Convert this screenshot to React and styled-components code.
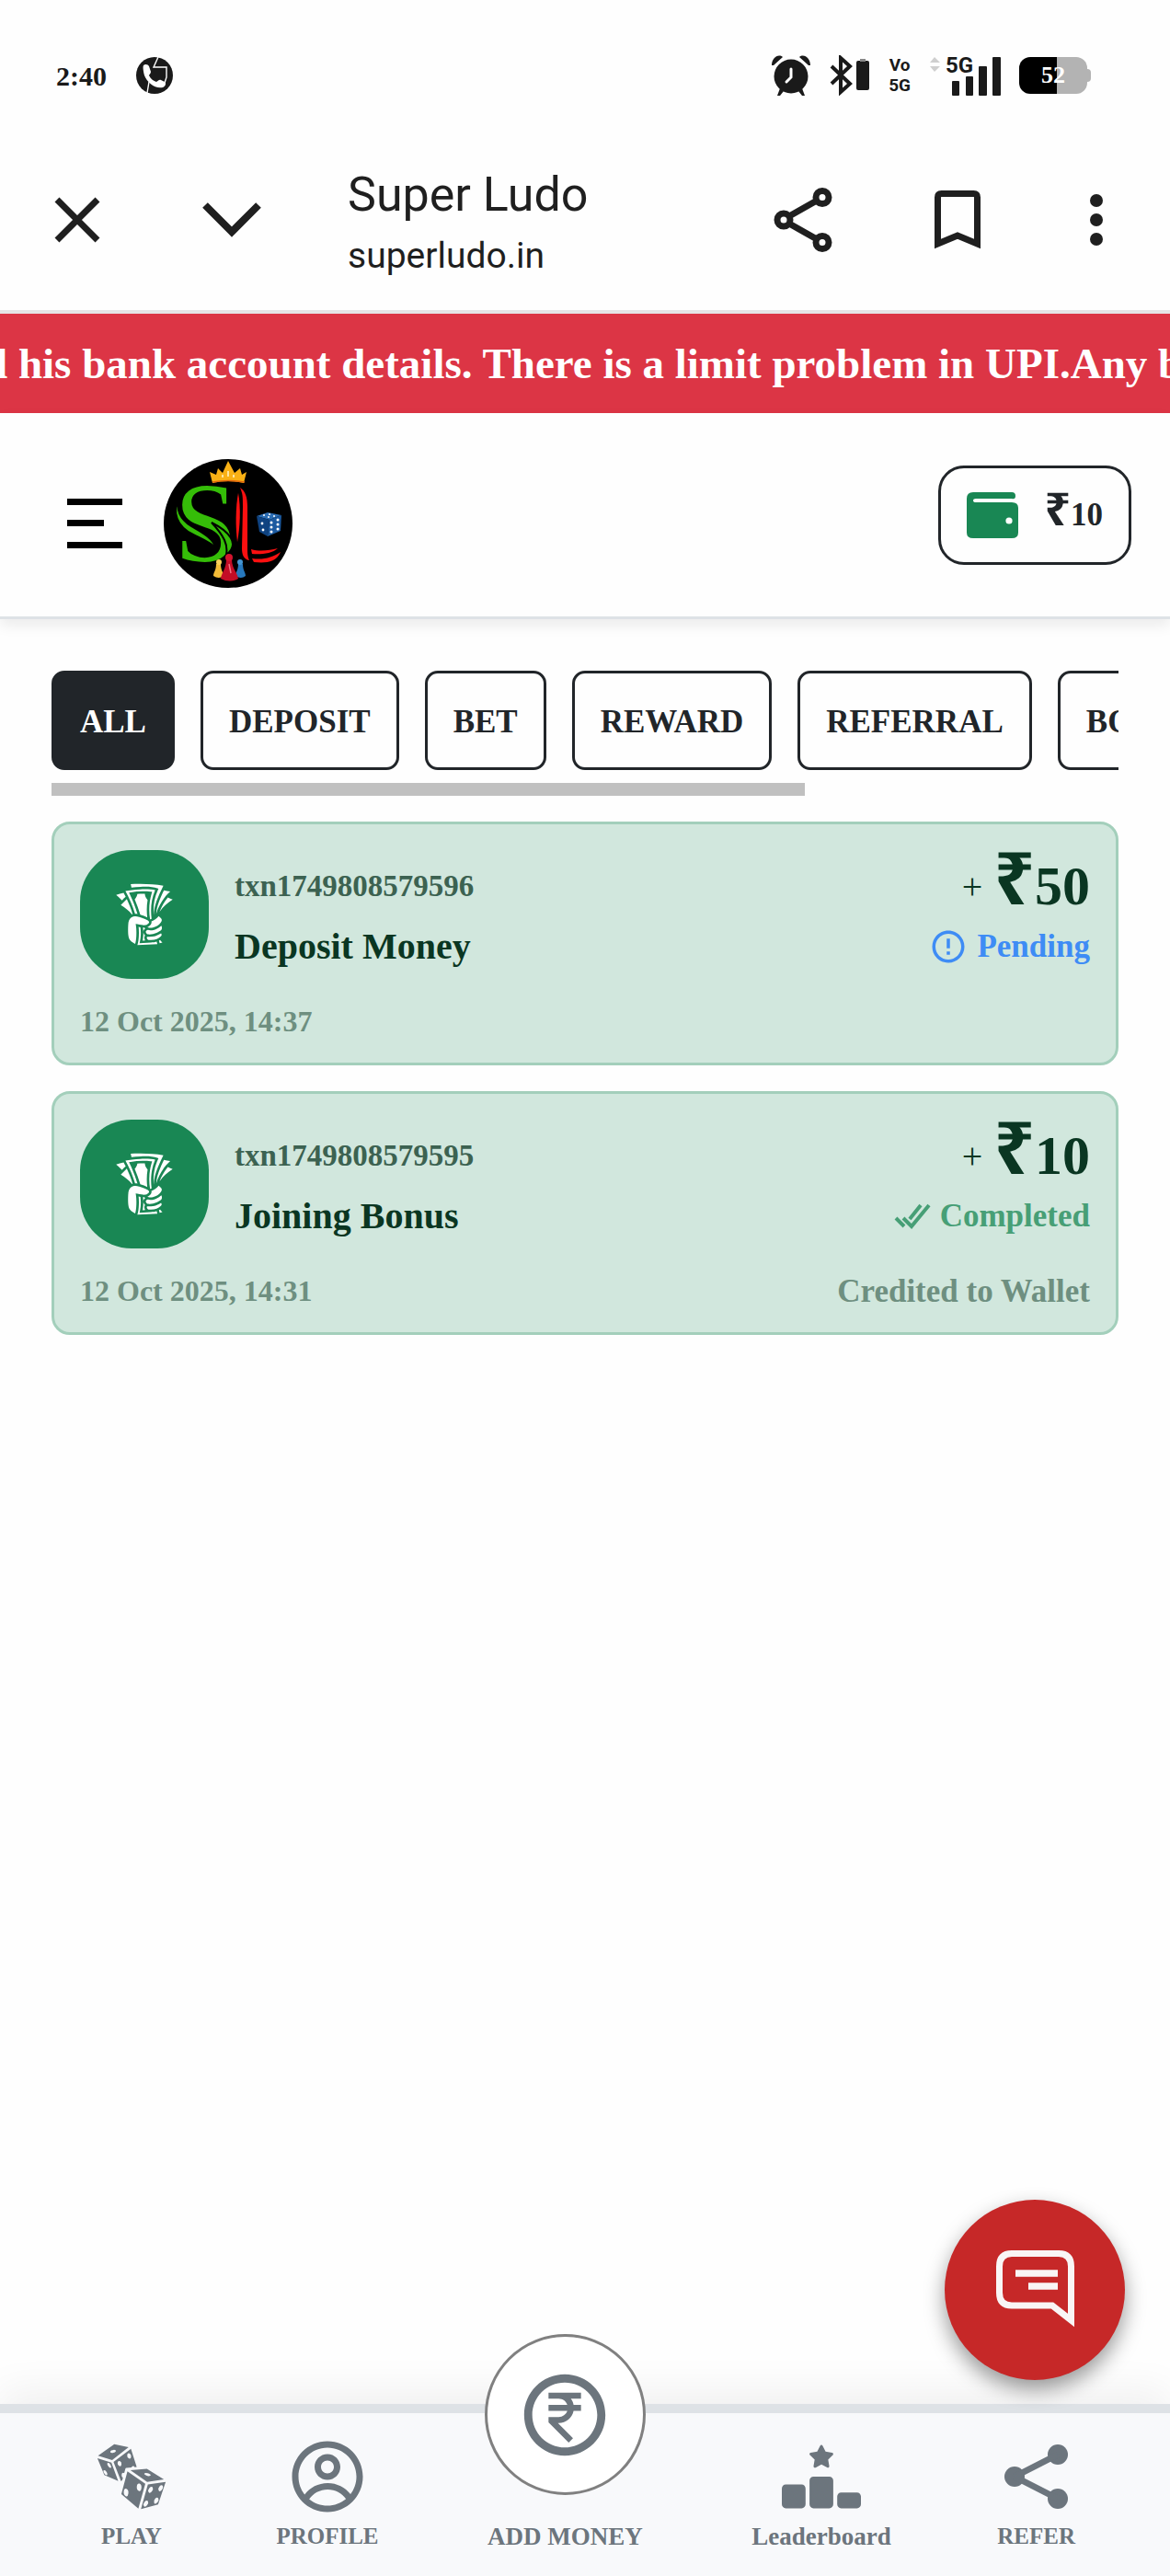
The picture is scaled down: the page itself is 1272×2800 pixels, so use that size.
import React from "react";
import styled, { createGlobalStyle } from "styled-components";
import { CgProfile } from "react-icons/cg";
import { GiRollingDices, GiTakeMyMoney } from "react-icons/gi";
import { RiMoneyRupeeCircleLine } from "react-icons/ri";
import { FaRankingStar } from "react-icons/fa6";
import { MdErrorOutline } from "react-icons/md";

const GlobalStyle = createGlobalStyle`
  *, *::before, *::after { box-sizing: border-box; }
  body {
    margin: 0;
    background: #fefefe;
    color: #212529;
    font-family: "Liberation Serif", serif;
    font-weight: 700;
  }
  button { font: inherit; color: inherit; background: none; border: 0; padding: 0; margin: 0; cursor: pointer; }
  a { color: inherit; text-decoration: none; }
  svg { display: block; flex: none; }
`;

const Page = styled.div`
  min-height: 100vh;
  display: flex;
  flex-direction: column;
  overflow: hidden;
`;

/* ---------- phone status bar ---------- */

const StatusBar = styled.div`
  display: flex;
  align-items: center;
  justify-content: space-between;
  padding: 60px 86px 37px 61px;
  color: #1a1a1a;
`;

const StatusGroup = styled.div`
  display: flex;
  align-items: center;
  gap: ${(p) => p.$gap}px;
  height: 44px;
`;

const Clock = styled.span`
  padding-top: 2px;
  font-size: 30px;
`;

const NarrowStack = styled.span`
  display: flex;
  flex-direction: column;
  font-family: Roboto, sans-serif;
  font-size: 19px;
  line-height: 22px;
  text-align: center;
`;

const Signal = styled.div`
  display: flex;
  align-items: flex-start;
`;

const SignalBars = styled.div`
  position: relative;
`;

const SignalLabel = styled.span`
  position: absolute;
  left: 0;
  top: 0;
  font-family: Roboto, sans-serif;
  font-size: 24px;
  line-height: 20px;
`;

const Battery = styled.div`
  display: flex;
  align-items: center;
`;

const BatteryBody = styled.div`
  width: 74px;
  height: 40px;
  border-radius: 12px;
  background: linear-gradient(90deg, #000 56%, #b3b3b3 56%);
  color: #fff;
  font-size: 26px;
  line-height: 40px;
  text-align: center;
`;

const BatteryTip = styled.div`
  width: 4px;
  height: 14px;
  border-radius: 0 4px 4px 0;
  background: #b3b3b3;
`;

/* ---------- browser bar ---------- */

const BrowserBar = styled.div`
  display: flex;
  align-items: center;
  gap: 84px;
  height: 200px;
  padding: 0 55px 0 42px;
  border-bottom: 4px solid #e6e4e6;
  color: #1f1f1f;
`;

const BarButton = styled.button`
  display: flex;
  align-items: center;
  justify-content: center;
  width: ${(p) => (p.$slim ? 50 : 84)}px;
  height: 84px;
  flex: none;
`;

const SiteInfo = styled.div`
  flex: 1;
  padding-top: 12px;
  font-family: Roboto, sans-serif;
  font-weight: 400;
  line-height: 66px;
  white-space: nowrap;
`;

const SiteTitle = styled.div`
  font-size: 52px;
`;

const SiteHost = styled.div`
  font-size: 39px;
`;

/* ---------- notice and header ---------- */

const Notice = styled.div`
  overflow: hidden;
  background: #dc3545;
  color: #fff;
  font-size: 47px;
  line-height: 108px;
  text-indent: -18px;
  white-space: nowrap;
`;

const Header = styled.header`
  display: flex;
  align-items: flex-start;
  justify-content: space-between;
  padding: 50px 42px 31px 73px;
  border-bottom: 3px solid #dee2e6;
  box-shadow: 0 7px 14px rgba(0, 0, 0, 0.075);
`;

const Brand = styled.div`
  display: flex;
  align-items: center;
  gap: 45px;
`;

const WalletButton = styled.button`
  display: flex;
  align-items: center;
  gap: 28px;
  height: 108px;
  margin-top: 7px;
  padding: 0 28px;
  border: 3px solid #212529;
  border-radius: 28px;
`;

const Money = styled.span`
  font-size: ${(p) => p.$size}px;
  line-height: 66px;
`;

const Rupee = styled.span`
  font-family: "Noto Sans", sans-serif;
  font-size: ${(p) => p.$size}px;
  line-height: 0;
`;

/* ---------- filters ---------- */

const Main = styled.main`
  flex: 1;
  padding: 56px;
`;

const Tabs = styled.nav`
  display: flex;
  gap: 28px;
  overflow: hidden;
`;

const Tab = styled.button`
  flex: none;
  height: 108px;
  padding: 4px 28px 0;
  border: 3px solid #212529;
  border-radius: 14px;
  background: ${(p) => (p.$active ? "#212529" : "transparent")};
  color: ${(p) => (p.$active ? "#fff" : "#212529")};
  font-size: 35px;
`;

const ScrollTrack = styled.div`
  display: flex;
  height: 14px;
  margin: 14px 0 28px;
`;

const ScrollThumb = styled.div`
  flex: 12;
  background: #c0c0c0;
`;

const ScrollRest = styled.div`
  flex: 5;
`;

/* ---------- transactions ---------- */

const CardList = styled.div`
  display: flex;
  flex-direction: column;
  gap: 28px;
`;

const Card = styled.article`
  padding: 28px;
  border: 3px solid #a3cfbb;
  border-radius: 20px;
  background: #d1e7dd;
  color: #0a3622;
`;

const CardTop = styled.div`
  display: flex;
  align-items: center;
  gap: 28px;
`;

const Tile = styled.div`
  display: flex;
  align-items: center;
  justify-content: center;
  width: 140px;
  height: 140px;
  border-radius: 56px;
  background: #198754;
  color: #fff;
`;

const CardText = styled.div`
  flex: 1;
  padding-top: 4px;
  line-height: 66px;
`;

const TxnId = styled.div`
  color: #3c6251;
  font-size: 33px;
`;

const TxnTitle = styled.div`
  font-size: 40px;
`;

const CardSide = styled.div`
  padding-top: 4px;
  text-align: right;
`;

const Amount = styled.div`
  height: 66px;
  white-space: nowrap;
`;

const Plus = styled.span`
  margin-right: 12px;
  font-size: 40px;
  font-weight: 400;
  line-height: 0;
  vertical-align: 6px;
`;

const Status = styled.div`
  display: flex;
  align-items: center;
  justify-content: flex-end;
  gap: 10px;
  color: ${(p) => p.$color};
  font-size: 35px;
  line-height: 66px;
`;

const CardFoot = styled.div`
  display: flex;
  justify-content: space-between;
  margin-top: 30px;
  color: #6e8f80;
  font-size: 32px;
  line-height: 33px;
`;

const Remark = styled.span`
  font-size: 35px;
`;

/* ---------- bottom navigation ---------- */

const ChatButton = styled.button`
  position: fixed;
  right: 49px;
  bottom: 213px;
  z-index: 2;
  display: flex;
  align-items: center;
  justify-content: center;
  width: 196px;
  height: 196px;
  border-radius: 50%;
  background: #c62828;
  box-shadow: 0 10px 22px rgba(0, 0, 0, 0.4);
`;

const BottomNav = styled.nav`
  display: flex;
  align-items: flex-end;
  justify-content: space-between;
  height: 187px;
  padding: 0 103px 28px 101px;
  border-top: 10px solid #dee2e6;
  background: #f8f9fb;
  box-shadow: 0 -14px 42px rgba(0, 0, 0, 0.06);
  color: #6c757d;
`;

const NavItem = styled.a`
  display: flex;
  flex-direction: column;
  align-items: center;
  gap: ${(p) => (p.$raised ? 30 : 8)}px;
  min-width: 84px;
  font-size: ${(p) => (p.$wide ? 27 : 25)}px;
  line-height: 30px;
  white-space: nowrap;
`;

const NavIcon = styled.span`
  display: flex;
  align-items: center;
  justify-content: center;
  width: 84px;
  height: 84px;
`;

const AddCircle = styled.span`
  display: flex;
  align-items: center;
  justify-content: center;
  width: 175px;
  height: 175px;
  border: 3px solid #808080;
  border-radius: 50%;
  background: #fff;
`;

/* ---------- drawings ---------- */

const CallIcon = () => (
  <svg width="40" height="40" viewBox="0 0 40 40">
    <circle cx="20" cy="20" r="20" fill="#1a1a1a" />
    <path d="M24 0 19 11H33V22L31 28M14 27 12 39" fill="none" stroke="#fff" strokeWidth="1.4" />
    <path d="M8 9c2-2 5-1 6 1l2 6c0 2-2 3-2 4 2 4 5 6 8 7 2-1 3-3 5-2l4 2c2 1 1 5-2 6-8 2-17-5-20-13-1-4-2-9-1-11z" fill="#fff" />
  </svg>
);

const AlarmIcon = () => (
  <svg width="44" height="44" viewBox="0 0 44 44">
    <circle cx="22" cy="23" r="18.500" fill="#1a1a1a" />
    <path d="M1 11C1 3 8-2 13 2L3 11zM43 11C43 3 36-2 31 2L41 11zM10 36 7 44h3l4-5zM34 36l3 8h-3l-4-5z" fill="#1a1a1a" />
    <path d="M22 15v9l-5 5" fill="none" stroke="#fff" strokeWidth="3" strokeLinecap="round" />
  </svg>
);

const BluetoothIcon = () => (
  <svg width="44" height="44" viewBox="0 0 44 44">
    <path d="M2 12 22 31 12 40V3L22 12 2 31" fill="none" stroke="#1a1a1a" strokeWidth="4" />
    <rect x="29" y="6" width="14" height="32" rx="2" fill="#1a1a1a" />
    <rect x="33" y="4" width="6" height="3" fill="#888" />
  </svg>
);

const DataArrows = () => (
  <svg width="18" height="20" viewBox="0 0 18 20">
    <path d="M1 7 6 1l6 6zM1 11l5 6 6-6z" fill="#cfcfcf" />
  </svg>
);

const BarsIcon = () => (
  <svg width="60" height="43" viewBox="0 0 60 43">
    <g fill="#1a1a1a">
      <rect x="7" y="27" width="8" height="16" rx="1" />
      <rect x="22" y="22" width="8" height="21" rx="1" />
      <rect x="36" y="11" width="9" height="32" rx="1" />
      <rect x="51" y="1" width="9" height="42" rx="1" />
    </g>
  </svg>
);

const CloseIcon = () => (
  <svg width="50" height="50" viewBox="0 0 50 50">
    <path d="M3 3 47 47M47 3 3 47" stroke="#1f1f1f" strokeWidth="7" />
  </svg>
);

const ChevronIcon = () => (
  <svg width="64" height="38" viewBox="0 0 64 38">
    <path d="M3 3 32 32 61 3" fill="none" stroke="#1f1f1f" strokeWidth="8" />
  </svg>
);

const ShareOutline = () => (
  <svg width="64" height="70" viewBox="0 0 64 70">
    <g fill="none" stroke="#1f1f1f" strokeWidth="7">
      <circle cx="11" cy="35" r="7" />
      <circle cx="53" cy="10.500" r="7" />
      <circle cx="53" cy="59.500" r="7" />
      <path d="M17 31 47 14M17 39l30 17" />
    </g>
  </svg>
);

const BookmarkIcon = () => (
  <svg width="50" height="64" viewBox="0 0 50 64">
    <path d="M3.500 58V7.500q0-4 4-4h35q4 0 4 4V58L25 49z" fill="none" stroke="#1f1f1f" strokeWidth="7" />
  </svg>
);

const DotsIcon = () => (
  <svg width="14" height="56" viewBox="0 0 14 56" fill="#1f1f1f">
    <circle cx="7" cy="7" r="7" />
    <circle cx="7" cy="28" r="7" />
    <circle cx="7" cy="49" r="7" />
  </svg>
);

const MenuIcon = () => (
  <svg width="60" height="54" viewBox="0 0 60 54">
    <path d="M0 0h60v7H0zM0 23h40v7H0zM0 47h60v7H0z" />
  </svg>
);

const Logo = () => (
  <svg width="140" height="140" viewBox="0 0 140 140">
    <circle cx="70" cy="70" r="70" fill="#000" />
    <path d="M53 26 50 14l7 3 2-7 5 5 6-13 7 13 6-5 2 7 5-3-3 12q-17-4-34 0z" fill="#f9b115" />
    <path d="M53 25q17-3 35 0" fill="none" stroke="#e2660c" strokeWidth="1.500" />
    <path d="M70 13v6M64 17v3M76 17v3" stroke="#fff3c0" strokeWidth="1.600" />
    <text x="12" y="111" fill="#35bd08" fontFamily="Liberation Serif, serif" fontWeight="400" fontSize="122">S</text>
    <g fill="#35bd08" stroke="#000" strokeWidth="2">
      <path d="M16 41C9 58 14 73 32 82 42 87 52 91 57 97 53 85 40 79 30 73 17 65 13 55 16 41z" />
      <path d="M52 69C70 78 84 92 68 104 70 93 66 84 52 69z" />
    </g>
    <g fill="#fb1010">
      <path d="M83 31c6 4 8 11 8 21v42c0 8 0 12 2 16-6-1-8-6-8-13l1-45c0-11 0-14-3-21z" />
      <path d="M81 37c3 15 2 38-1 53-2-16-2-38 1-53z" />
      <path d="M95 98c10 3 20 1 29-1-6 6-20 7-28 6z" />
      <path d="M96 108c12 2 22-1 31-7-5 12-17 12-29 11z" />
    </g>
    <path d="M101 62 113 58 128 61 115 66z" fill="#2c6db3" />
    <path d="M101 62 115 66 113 84 104 79z" fill="#0f4381" />
    <path d="M115 66 128 61 127 78 113 84z" fill="#1c5aa0" />
    <g fill="#fff">
      <circle cx="109" cy="61" r="1" />
      <circle cx="114" cy="63" r="1" />
      <circle cx="115" cy="60" r="1" />
      <circle cx="120" cy="62" r="1" />
      <circle cx="107" cy="70" r="1.400" />
      <circle cx="108" cy="77" r="1.400" />
      <circle cx="117" cy="69" r="1.500" />
      <circle cx="117" cy="74" r="1.500" />
      <circle cx="117" cy="79" r="1.500" />
      <circle cx="124" cy="66" r="1.500" />
      <circle cx="124" cy="71" r="1.500" />
      <circle cx="124" cy="76" r="1.500" />
    </g>
    <path d="M57 114h5c0 7 3 9 3 13q-5 4-11 0c0-4 3-6 3-13z" fill="#f3bb38" />
    <circle cx="60" cy="112" r="3" fill="#f8cf5b" />
    <path d="M81 114h5c0 7 3 9 3 13q-5 4-11 0c0-4 3-6 3-13z" fill="#2778bd" />
    <circle cx="83" cy="112" r="3" fill="#4495d3" />
    <path d="M68 109h6c0 10 6 14 7 21q-9 5-19 0c1-7 6-11 6-21z" fill="#c30d26" />
    <circle cx="71" cy="107" r="4" fill="#d5142e" />
    <path d="M71 114l2 10" stroke="#f37384" strokeWidth="1.500" />
  </svg>
);

const WalletIcon = () => (
  <svg width="56" height="60" viewBox="0 -5 56 60">
    <path d="M7 0H49q4 0 4 4t-4 3H10q-3 0-3 2t3 2H49q7 0 7 6V44q0 6-7 6H7q-7 0-7-6V7Q0 0 7 0z" fill="#198754" />
    <circle cx="46" cy="31" r="3.600" fill="#fff" />
  </svg>
);

const DoubleCheck = () => (
  <svg width="40" height="28" viewBox="0 0 40 28">
    <path d="M2 16 11 25M10 16 19 25 38 2M17 17 29 2" fill="none" stroke="#479f76" strokeWidth="4" />
  </svg>
);

const ChatIcon = () => (
  <svg width="85" height="86" viewBox="0 0 85 86">
    <path d="M17 3.500H68q13.500 0 13.500 14V76L61 60H17Q3.500 60 3.500 46V17.500Q3.500 3.500 17 3.500z" fill="none" stroke="#f9f5f5" strokeWidth="7" />
    <path d="M21 25H67M35 39H67" stroke="#f9f5f5" strokeWidth="7.500" />
  </svg>
);

const ShareSolid = () => (
  <svg width="69" height="70" viewBox="0 0 69 70" fill="#6c757d">
    <circle cx="11" cy="35" r="11" />
    <circle cx="58" cy="11" r="11" />
    <circle cx="58" cy="59" r="11" />
    <path d="M11 35 58 11M11 35 58 59" stroke="#6c757d" strokeWidth="7" />
  </svg>
);

/* ---------- data ---------- */

const filters = ["ALL", "DEPOSIT", "BET", "REWARD", "REFERRAL", "BONUS"];

const transactions = [
  { id: "txn1749808579596", title: "Deposit Money", amount: 50, date: "12 Oct 2025, 14:37", done: false, remark: "" },
  { id: "txn1749808579595", title: "Joining Bonus", amount: 10, date: "12 Oct 2025, 14:31", done: true, remark: "Credited to Wallet" },
];

function Transaction({ item }) {
  return (
    <Card>
      <CardTop>
        <Tile>
          <GiTakeMyMoney size={76} />
        </Tile>
        <CardText>
          <TxnId>{item.id}</TxnId>
          <TxnTitle>{item.title}</TxnTitle>
        </CardText>
        <CardSide>
          <Amount>
            <Plus>+</Plus>
            <Rupee $size={78}>₹</Rupee>
            <Money $size={60}>{item.amount}</Money>
          </Amount>
          <Status $color={item.done ? "#479f76" : "#3e8cf5"}>
            {item.done ? <DoubleCheck /> : <MdErrorOutline size={42} />}
            {item.done ? "Completed" : "Pending"}
          </Status>
        </CardSide>
      </CardTop>
      <CardFoot>
        <time>{item.date}</time>
        {item.remark && <Remark>{item.remark}</Remark>}
      </CardFoot>
    </Card>
  );
}

export default function App() {
  return (
    <Page>
      <GlobalStyle />
      <StatusBar>
        <StatusGroup $gap={32}>
          <Clock>2:40</Clock>
          <CallIcon />
        </StatusGroup>
        <StatusGroup $gap={20}>
          <AlarmIcon />
          <BluetoothIcon />
          <NarrowStack>
            <span>Vo</span>
            <span>5G</span>
          </NarrowStack>
          <Signal>
            <DataArrows />
            <SignalBars>
              <BarsIcon />
              <SignalLabel>5G</SignalLabel>
            </SignalBars>
          </Signal>
          <Battery>
            <BatteryBody>52</BatteryBody>
            <BatteryTip />
          </Battery>
        </StatusGroup>
      </StatusBar>

      <BrowserBar>
        <BarButton aria-label="Close"><CloseIcon /></BarButton>
        <BarButton aria-label="Minimize"><ChevronIcon /></BarButton>
        <SiteInfo>
          <SiteTitle>Super Ludo</SiteTitle>
          <SiteHost>superludo.in</SiteHost>
        </SiteInfo>
        <BarButton aria-label="Share"><ShareOutline /></BarButton>
        <BarButton aria-label="Bookmark"><BookmarkIcon /></BarButton>
        <BarButton $slim aria-label="More"><DotsIcon /></BarButton>
      </BrowserBar>

      <Notice>d his bank account details. There is a limit problem in UPI.Any b</Notice>

      <Header>
        <Brand>
          <button aria-label="Menu"><MenuIcon /></button>
          <a href="#home" aria-label="Home"><Logo /></a>
        </Brand>
        <WalletButton>
          <WalletIcon />
          <span>
            <Rupee $size={50}>₹</Rupee>
            <Money $size={35}>10</Money>
          </span>
        </WalletButton>
      </Header>

      <Main>
        <Tabs>
          {filters.map((name, i) => (
            <Tab key={name} $active={i === 0}>{name}</Tab>
          ))}
        </Tabs>
        <ScrollTrack>
          <ScrollThumb />
          <ScrollRest />
        </ScrollTrack>
        <CardList>
          {transactions.map((item) => (
            <Transaction key={item.id} item={item} />
          ))}
        </CardList>
      </Main>

      <ChatButton aria-label="Chat"><ChatIcon /></ChatButton>

      <BottomNav>
        <NavItem href="#play">
          <NavIcon><GiRollingDices size={82} /></NavIcon>
          PLAY
        </NavItem>
        <NavItem href="#profile">
          <NavIcon><CgProfile size={84} /></NavIcon>
          PROFILE
        </NavItem>
        <NavItem href="#add" $wide $raised>
          <AddCircle><RiMoneyRupeeCircleLine size={106} /></AddCircle>
          ADD MONEY
        </NavItem>
        <NavItem href="#leaderboard" $wide>
          <NavIcon><FaRankingStar size={86} /></NavIcon>
          Leaderboard
        </NavItem>
        <NavItem href="#refer">
          <NavIcon><ShareSolid /></NavIcon>
          REFER
        </NavItem>
      </BottomNav>
    </Page>
  );
}
